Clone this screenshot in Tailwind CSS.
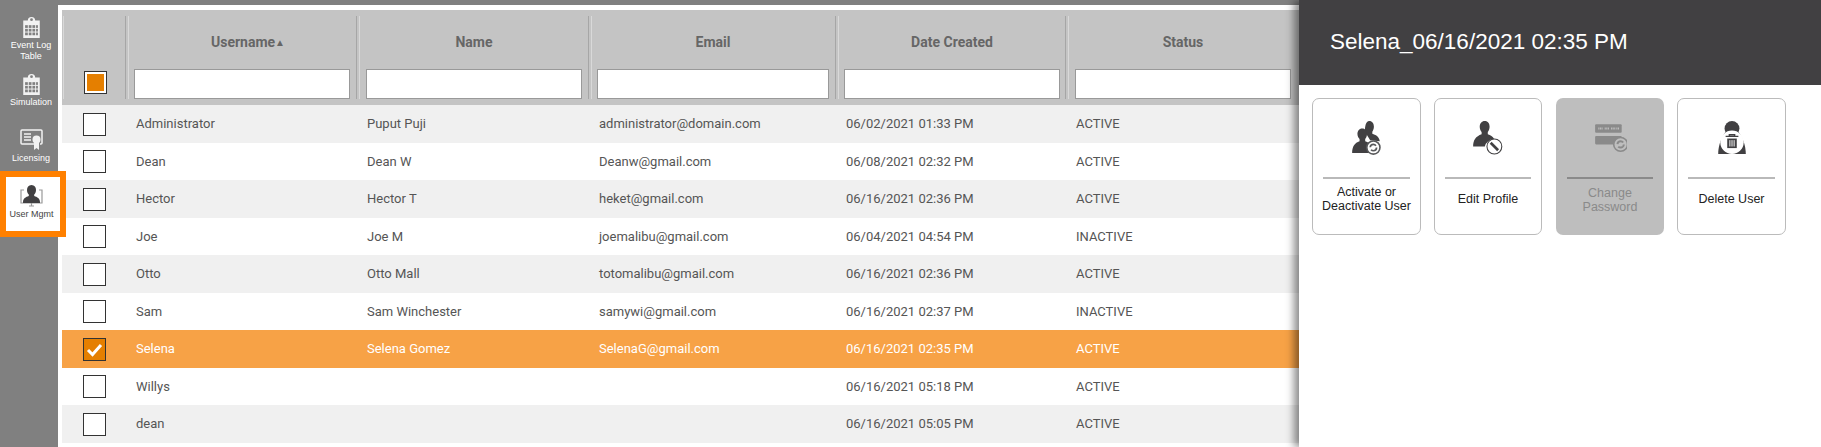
<!doctype html>
<html lang="en">
  <head>
    <meta charset="UTF-8" />
    <title>User Mgmt</title>
    <script src="https://cdn.jsdelivr.net/npm/@tailwindcss/browser@4"></script>
  </head>

  <body class="h-[447px] overflow-hidden bg-white font-['Roboto',sans-serif]">
    <div class="relative flex h-[447px] flex-col overflow-hidden">
      <div class="h-[5px] bg-[#808080]"></div>

      <div class="flex flex-1">
        <!-- sidebar -->
        <nav class="flex w-[58px] shrink-0 flex-col bg-[#808080] text-center font-['Liberation_Sans',sans-serif] text-[9px] leading-[11px] text-white">
          <a class="flex h-[60px] flex-col items-center pt-[11px] pl-[4px]">
            <svg class="h-[22px] w-[19px]" viewBox="0 0 20 24" fill="#f2f2f2"><path d="M1 5h5a4 4 0 0 1 8 0h5v19H1z"/><g fill="#808080"><circle cx="10" cy="4" r="1.5"/><rect x="3" y="10" width="3" height="3"/><rect x="7" y="10" width="3" height="3"/><rect x="11" y="10" width="3" height="3"/><rect x="15" y="10" width="2" height="3"/><rect x="3" y="14" width="3" height="3"/><rect x="7" y="14" width="3" height="3"/><rect x="11" y="14" width="3" height="3"/><rect x="15" y="14" width="2" height="3"/><rect x="3" y="18" width="3" height="3"/><rect x="7" y="18" width="3" height="3"/><rect x="11" y="18" width="3" height="3"/><rect x="15" y="18" width="2" height="3"/></g></svg>
            <span class="mt-[2px]">Event Log<br />Table</span>
          </a>
          <a class="flex h-[56px] flex-col items-center pt-[8px] pl-[4px]">
            <svg class="h-[22px] w-[19px]" viewBox="0 0 20 24" fill="#f2f2f2"><path d="M1 5h5a4 4 0 0 1 8 0h5v19H1z"/><g fill="#808080"><circle cx="10" cy="4" r="1.5"/><rect x="3" y="10" width="3" height="3"/><rect x="7" y="10" width="3" height="3"/><rect x="11" y="10" width="3" height="3"/><rect x="15" y="10" width="2" height="3"/><rect x="3" y="14" width="3" height="3"/><rect x="7" y="14" width="3" height="3"/><rect x="11" y="14" width="3" height="3"/><rect x="15" y="14" width="2" height="3"/><rect x="3" y="18" width="3" height="3"/><rect x="7" y="18" width="3" height="3"/><rect x="11" y="18" width="3" height="3"/><rect x="15" y="18" width="2" height="3"/></g></svg>
            <span class="mt-[2px]">Simulation</span>
          </a>
          <a class="flex h-[50px] flex-col items-center pt-[8px] pl-[4px]">
            <svg class="h-[22px] w-[23px]" viewBox="0 0 23 22" fill="none"><path d="M15 15H2a1 1 0 0 1-1-1V2a1 1 0 0 1 1-1h19a1 1 0 0 1 1 1v12a1 1 0 0 1-1 1h-1" stroke="#f2f2f2" stroke-width="1.5"/><path d="M4 5h7M4 8h7M4 11h7" stroke="#f2f2f2" stroke-width="1.3"/><circle cx="16.500" cy="10.500" r="4" fill="#f2f2f2"/><path d="M14 13v8l2.500-2 2.500 2v-8z" fill="#f2f2f2"/></svg>
            <span class="mt-[2px]">Licensing</span>
          </a>
          <a class="relative z-10 flex h-[66px] w-[66px] flex-col items-center border-[6px] border-[#ff8000] bg-white pt-[8px] pr-[3px] text-[#444]">
            <svg class="h-[22px] w-[23px]" viewBox="0 0 23 22" fill="none"><path d="M4 5H1v13h21V5h-3M9 21h5M11.500 18v3" stroke="#999" stroke-width="1.2"/><path d="M11.500 0c3 0 4.500 2.200 4.500 5 0 2-.8 3.500-1.800 4.500v1.500c3 1 5.800 2.500 5.800 6v1H3v-1c0-3.500 2.800-5 5.800-6V9.500C7.800 8.500 7 7 7 5c0-2.800 1.500-5 4.500-5z" fill="#414042"/></svg>
            <span class="mt-[2px]">User Mgmt</span>
          </a>
        </nav>

        <!-- table -->
        <main class="flex-1 pt-[5px] pl-[4px] text-[13px] text-[#555]">
          <div class="grid h-[95px] grid-cols-[66px_231px_232px_247px_230px_230px] bg-[#c4c4c4] pt-[6px] text-[14px] font-bold text-[#666]">
            <div class="mr-[2px] ml-[1px] flex h-[83px] items-end justify-center border-x border-l-[#d9d9d9] border-r-[#a6a6a6] pl-[2px] pb-[5px]">
              <span class="flex size-[23px] items-center justify-center border border-[#333] bg-white"><span class="size-[17px] bg-[#e57f00]"></span></span>
            </div>
            <div class="mr-[2px] flex h-[83px] flex-col border-x border-l-[#d9d9d9] border-r-[#a6a6a6] pl-[5px]">
              <span class="flex h-[53px] w-[216px] items-center justify-center pb-[1px] pl-[12px]">Username<span class="text-[10px]">▲</span></span>
              <span class="h-[30px] w-[216px] border border-[#999] bg-white"></span>
            </div>
            <div class="mr-[2px] flex h-[83px] flex-col border-x border-l-[#d9d9d9] border-r-[#a6a6a6] pl-[6px]">
              <span class="flex h-[53px] w-[216px] items-center justify-center pb-[1px]">Name</span>
              <span class="h-[30px] w-[216px] border border-[#999] bg-white"></span>
            </div>
            <div class="mr-[2px] flex h-[83px] flex-col border-x border-l-[#d9d9d9] border-r-[#a6a6a6] pl-[5px]">
              <span class="flex h-[53px] w-[232px] items-center justify-center pb-[1px]">Email</span>
              <span class="h-[30px] w-[232px] border border-[#999] bg-white"></span>
            </div>
            <div class="mr-[2px] flex h-[83px] flex-col border-x border-l-[#d9d9d9] border-r-[#a6a6a6] pl-[5px]">
              <span class="flex h-[53px] w-[216px] items-center justify-center pb-[1px]">Date Created</span>
              <span class="h-[30px] w-[216px] border border-[#999] bg-white"></span>
            </div>
            <div class="flex h-[83px] flex-col border-l border-l-[#d9d9d9] pl-[6px]">
              <span class="flex h-[53px] w-[216px] items-center justify-center pb-[1px]">Status</span>
              <span class="h-[30px] w-[216px] border border-[#999] bg-white"></span>
            </div>
          </div>

          <div class="grid h-[38px] grid-cols-[66px_231px_232px_247px_230px_1fr] items-center bg-[#f0f0f0]">
            <span class="ml-[21px] size-[23px] border border-[#333] bg-white"></span>
            <span class="pl-[8px]">Administrator</span><span class="pl-[8px]">Puput Puji</span><span class="pl-[8px]">administrator@domain.com</span><span class="pl-[8px]">06/02/2021 01:33 PM</span><span class="pl-[8px]">ACTIVE</span>
          </div>
          <div class="grid h-[37px] grid-cols-[66px_231px_232px_247px_230px_1fr] items-center">
            <span class="ml-[21px] size-[23px] border border-[#333] bg-white"></span>
            <span class="pl-[8px]">Dean</span><span class="pl-[8px]">Dean W</span><span class="pl-[8px]">Deanw@gmail.com</span><span class="pl-[8px]">06/08/2021 02:32 PM</span><span class="pl-[8px]">ACTIVE</span>
          </div>
          <div class="grid h-[38px] grid-cols-[66px_231px_232px_247px_230px_1fr] items-center bg-[#f0f0f0]">
            <span class="ml-[21px] size-[23px] border border-[#333] bg-white"></span>
            <span class="pl-[8px]">Hector</span><span class="pl-[8px]">Hector T</span><span class="pl-[8px]">heket@gmail.com</span><span class="pl-[8px]">06/16/2021 02:36 PM</span><span class="pl-[8px]">ACTIVE</span>
          </div>
          <div class="grid h-[37px] grid-cols-[66px_231px_232px_247px_230px_1fr] items-center">
            <span class="ml-[21px] size-[23px] border border-[#333] bg-white"></span>
            <span class="pl-[8px]">Joe</span><span class="pl-[8px]">Joe M</span><span class="pl-[8px]">joemalibu@gmail.com</span><span class="pl-[8px]">06/04/2021 04:54 PM</span><span class="pl-[8px]">INACTIVE</span>
          </div>
          <div class="grid h-[38px] grid-cols-[66px_231px_232px_247px_230px_1fr] items-center bg-[#f0f0f0]">
            <span class="ml-[21px] size-[23px] border border-[#333] bg-white"></span>
            <span class="pl-[8px]">Otto</span><span class="pl-[8px]">Otto Mall</span><span class="pl-[8px]">totomalibu@gmail.com</span><span class="pl-[8px]">06/16/2021 02:36 PM</span><span class="pl-[8px]">ACTIVE</span>
          </div>
          <div class="grid h-[37px] grid-cols-[66px_231px_232px_247px_230px_1fr] items-center">
            <span class="ml-[21px] size-[23px] border border-[#333] bg-white"></span>
            <span class="pl-[8px]">Sam</span><span class="pl-[8px]">Sam Winchester</span><span class="pl-[8px]">samywi@gmail.com</span><span class="pl-[8px]">06/16/2021 02:37 PM</span><span class="pl-[8px]">INACTIVE</span>
          </div>
          <div class="grid h-[38px] grid-cols-[66px_231px_232px_247px_230px_1fr] items-center bg-[#f7a246] text-white">
            <span class="ml-[21px] flex size-[23px] items-center justify-center border border-[#333] bg-[#e57f00]">
              <svg class="size-[19px]" viewBox="0 0 19 19" fill="none"><path d="M3 10l4.500 4.500L16 5" stroke="#fff" stroke-width="3"/></svg>
            </span>
            <span class="pl-[8px]">Selena</span><span class="pl-[8px]">Selena Gomez</span><span class="pl-[8px]">SelenaG@gmail.com</span><span class="pl-[8px]">06/16/2021 02:35 PM</span><span class="pl-[8px]">ACTIVE</span>
          </div>
          <div class="grid h-[37px] grid-cols-[66px_231px_232px_247px_230px_1fr] items-center">
            <span class="ml-[21px] size-[23px] border border-[#333] bg-white"></span>
            <span class="pl-[8px]">Willys</span><span class="pl-[8px]"></span><span class="pl-[8px]"></span><span class="pl-[8px]">06/16/2021 05:18 PM</span><span class="pl-[8px]">ACTIVE</span>
          </div>
          <div class="grid h-[38px] grid-cols-[66px_231px_232px_247px_230px_1fr] items-center bg-[#f0f0f0]">
            <span class="ml-[21px] size-[23px] border border-[#333] bg-white"></span>
            <span class="pl-[8px]">dean</span><span class="pl-[8px]"></span><span class="pl-[8px]"></span><span class="pl-[8px]">06/16/2021 05:05 PM</span><span class="pl-[8px]">ACTIVE</span>
          </div>
        </main>
      </div>

      <!-- detail panel -->
      <aside class="absolute inset-y-0 right-0 z-20 w-[522px] bg-white font-['Liberation_Sans',sans-serif] shadow-[-5px_0_8px_rgba(0,0,0,0.45)]">
        <header class="flex h-[85px] items-center bg-[#414042] pb-[1px] pl-[31px] text-[22.5px] text-white">Selena_06/16/2021 02:35 PM</header>
        <div class="flex pt-[13px] pl-[13px] text-center text-[12.5px] leading-[14px] text-[#222]">
          <button class="flex h-[137px] w-[109px] shrink-0 flex-col items-center rounded-[7px] border border-[#bbb] px-[10px]">
            <svg class="mt-[22px] h-[34px] w-[30px] shrink-0" viewBox="0 0 28 32"><path d="M16 0c3 0 4.500 2.500 4.500 5.500 0 2-.8 3.500-1.500 4.500v2c3 1 6.500 2.500 7 7l-9-1-5-8C12 5 13 0 16 0z" fill="#414042"/><path d="M9.500 7c3 0 4.500 2.400 4.500 5.300 0 2-.8 3.700-1.700 4.700v2c2.500.8 4.700 2 5.700 4.500A9 9 0 0 0 16 30H0c0-6 2.500-9.500 7-11v-2c-1-1-2-2.700-2-4.700C5 9.400 6.500 7 9.500 7z" fill="#414042"/><circle cx="20" cy="25" r="6.200" fill="#fff" stroke="#58595b" stroke-width="1.500"/><circle cx="20" cy="25" r="3" fill="none" stroke="#58595b" stroke-width="1.600" stroke-dasharray="7 2.500"/></svg>
            <span class="mt-[22px] h-[2px] w-full shrink-0 bg-[#b9b9b9]"></span>
            <span class="mt-[6px] whitespace-nowrap">Activate or<br />Deactivate User</span>
          </button>
          <button class="ml-[13px] flex h-[137px] w-[108px] shrink-0 flex-col items-center rounded-[7px] border border-[#bbb] px-[10px]">
            <svg class="mt-[22px] h-[34px] w-[30px] shrink-0" viewBox="0 0 28 32"><path d="M11 0c3 0 4.500 2.500 4.500 5.500 0 2-.8 3.800-1.700 4.800v2.200c2.500.8 4.700 2 6 4.500A9 9 0 0 0 11 24H0c0-6 2.500-9.500 8-11.500v-2.200C7 9.300 6.200 7.500 6.200 5.500 6.200 2.500 8 0 11 0z" fill="#414042"/><circle cx="20" cy="24" r="7" fill="#fff" stroke="#414042" stroke-width="1"/><path d="M16.500 20.500l7 7" stroke="#414042" stroke-width="2.500"/></svg>
            <span class="mt-[22px] h-[2px] w-full shrink-0 bg-[#b9b9b9]"></span>
            <span class="mt-[13px] whitespace-nowrap">Edit Profile</span>
          </button>
          <button class="ml-[14px] flex h-[137px] w-[108px] shrink-0 flex-col items-center rounded-[7px] bg-[#bebebe] px-[11px] text-[#8a8a8a]">
            <svg class="mt-[23px] h-[34px] w-[34px] shrink-0" viewBox="0 0 32 32"><rect x="2" y="3" width="25" height="8" rx="1" fill="#8a8a8a"/><path d="M5 7h4M11 7h4M17 7h4M22 7h3" stroke="#bebebe" stroke-width="2" stroke-dasharray="1 .5"/><rect x="2" y="14" width="25" height="8" rx="1" fill="#8a8a8a"/><circle cx="26" cy="22" r="6.500" fill="#bebebe" stroke="#8a8a8a" stroke-width="1.500"/><circle cx="26" cy="22" r="3" fill="none" stroke="#8a8a8a" stroke-width="1.800" stroke-dasharray="7 2.500"/></svg>
            <span class="mt-[22px] h-[2px] w-full shrink-0 bg-[#8a8a8a]"></span>
            <span class="mt-[7px] whitespace-nowrap">Change<br />Password</span>
          </button>
          <button class="ml-[13px] flex h-[137px] w-[109px] shrink-0 flex-col items-center rounded-[7px] border border-[#bbb] px-[10px]">
            <svg class="mt-[22px] h-[34px] w-[30px] shrink-0" viewBox="0 0 28 32"><ellipse cx="14" cy="7" rx="7" ry="7" fill="#414042"/><path d="M8 10C4 15 1 23 1 31h26c0-8-3-16-7-21z" fill="#414042"/><circle cx="14" cy="20" r="11" fill="#fff"/><path d="M8 14.500h12M11.500 14.500v-1.500h5v1.500" stroke="#414042" stroke-width="1.300" fill="none"/><path d="M9.500 16.500h9v9h-9z" fill="#414042"/><path d="M12 18v6M14 18v6M16 18v6" stroke="#fff" stroke-width=".9"/></svg>
            <span class="mt-[22px] h-[2px] w-full shrink-0 bg-[#b9b9b9]"></span>
            <span class="mt-[13px] whitespace-nowrap">Delete User</span>
          </button>
        </div>
      </aside>
    </div>
  </body>
</html>
